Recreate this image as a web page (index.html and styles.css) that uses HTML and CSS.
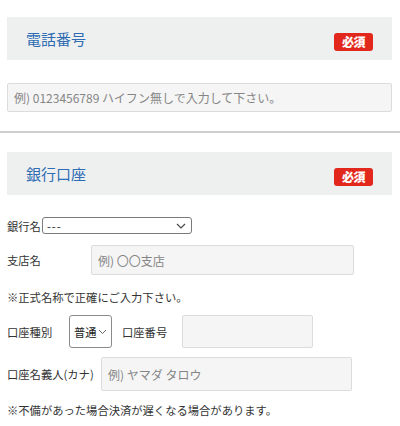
FILE: index.html
```html
<!DOCTYPE html>
<html lang="ja">
<head>
<meta charset="utf-8">
<link rel="stylesheet" href="styles.css">
</head>
<body>
<div class="sec">
  <div class="head"><span class="title">電話番号</span><span class="badge">必須</span></div>
  <input class="field tel" type="text" placeholder="例) 0123456789 ハイフン無しで入力して下さい。">
</div>
<div class="rule"></div>
<div class="sec">
  <div class="head head2"><span class="title">銀行口座</span><span class="badge">必須</span></div>
  <div class="row bank">
    <span class="lbl">銀行名</span>
    <div class="sel sel-bank"><span class="dash">---</span><svg width="10" height="6" viewBox="0 0 10 6"><path d="M1 1l4 4 4-4" fill="none" stroke="#444" stroke-width="1.1"/></svg></div>
  </div>
  <div class="row branch">
    <span class="lbl w84">支店名</span>
    <input class="field f-branch" type="text" placeholder="例) 〇〇支店">
  </div>
  <p class="note n1">※正式名称で正確にご入力下さい。</p>
  <div class="row acct">
    <span class="lbl w62">口座種別</span>
    <div class="sel sel-type"><span>普通</span><svg width="9" height="6" viewBox="0 0 9 6"><path d="M1 1l3.5 3.5L8 1" fill="none" stroke="#666" stroke-width="1"/></svg></div>
    <span class="lbl w60">口座番号</span>
    <input class="field f-num" type="text">
  </div>
  <div class="row kana">
    <span class="lbl w94">口座名義人(カナ)</span>
    <input class="field f-kana" type="text" placeholder="例) ヤマダ タロウ">
  </div>
  <p class="note n2">※不備があった場合決済が遅くなる場合があります。</p>
</div>
</body>
</html>
```
FILE: styles.css
```css
* { box-sizing: border-box; }
body {
  margin: 0;
  width: 400px;
  height: 426px;
  overflow: hidden;
  background: #fff;
  font-family: "Noto Sans CJK JP", "Noto Sans", sans-serif;
  color: #333;
}
.sec { padding: 0 8px 0 7px; }
.head {
  margin-top: 17px;
  height: 43px;
  background: #eef0f0;
  display: flex;
  align-items: center;
  justify-content: space-between;
  padding: 0 19px 0 19px;
}
.head2 { margin-top: 19px; }
.title {
  font-size: 15px;
  color: #2f6cb3;
  line-height: 1;
}
.badge {
  margin-top: 6px;
  width: 39px;
  height: 18px;
  border-radius: 3px;
  background: #e2281d;
  color: #fff;
  font-weight: 900;
  font-size: 12px;
  line-height: 18px;
  text-align: center;
  letter-spacing: -0.5px;
  transform-origin: center;
}
.field {
  display: block;
  border: 1px solid #dcdcdc;
  background: #f5f5f5;
  border-radius: 2px;
  font-family: inherit;
  font-size: 12px;
  color: #333;
  padding: 0 0 0 6px;
  outline: none;
  margin: 0;
}
.field::placeholder { color: #858585; }
.tel { margin-top: 23px; width: 385px; height: 29px; }
.rule { margin-top: 19px; height: 2px; background: #cfcfcf; }
.row { display: flex; align-items: center; }
.lbl { font-size: 11.3px; color: #333; white-space: nowrap; flex: none; }
.w84 { width: 84px; }
.w62 { width: 62px; }
.w60 { width: 60px; }
.w94 { width: 94px; }
.bank { margin-top: 22px; }
.sel {
  display: flex;
  align-items: center;
  justify-content: space-between;
  border: 1px solid #7a7a7a;
  border-radius: 3px;
  background: #fff;
  font-size: 11.3px;
  color: #222;
  flex: none;
}
.dash { letter-spacing: 1px; }
.sel-bank { width: 150px; height: 17px; padding: 0 5px 0 4px; margin-left: 1px; }
.sel-type { width: 43px; height: 33px; padding: 0 4px 0 4px; margin-right: 10px; border-color: #8a8a8a; }
.branch { margin-top: 11px; }
.f-branch { width: 263px; height: 30px; }
.note { margin: 0; font-size: 11.3px; line-height: 16px; color: #333; }
.n1 { margin-top: 14px; }
.acct { margin-top: 10px; }
.f-num { width: 131px; height: 33px; }
.kana { margin-top: 9px; }
.f-kana { width: 251px; height: 34px; }
.n2 { margin-top: 11px; }
```
